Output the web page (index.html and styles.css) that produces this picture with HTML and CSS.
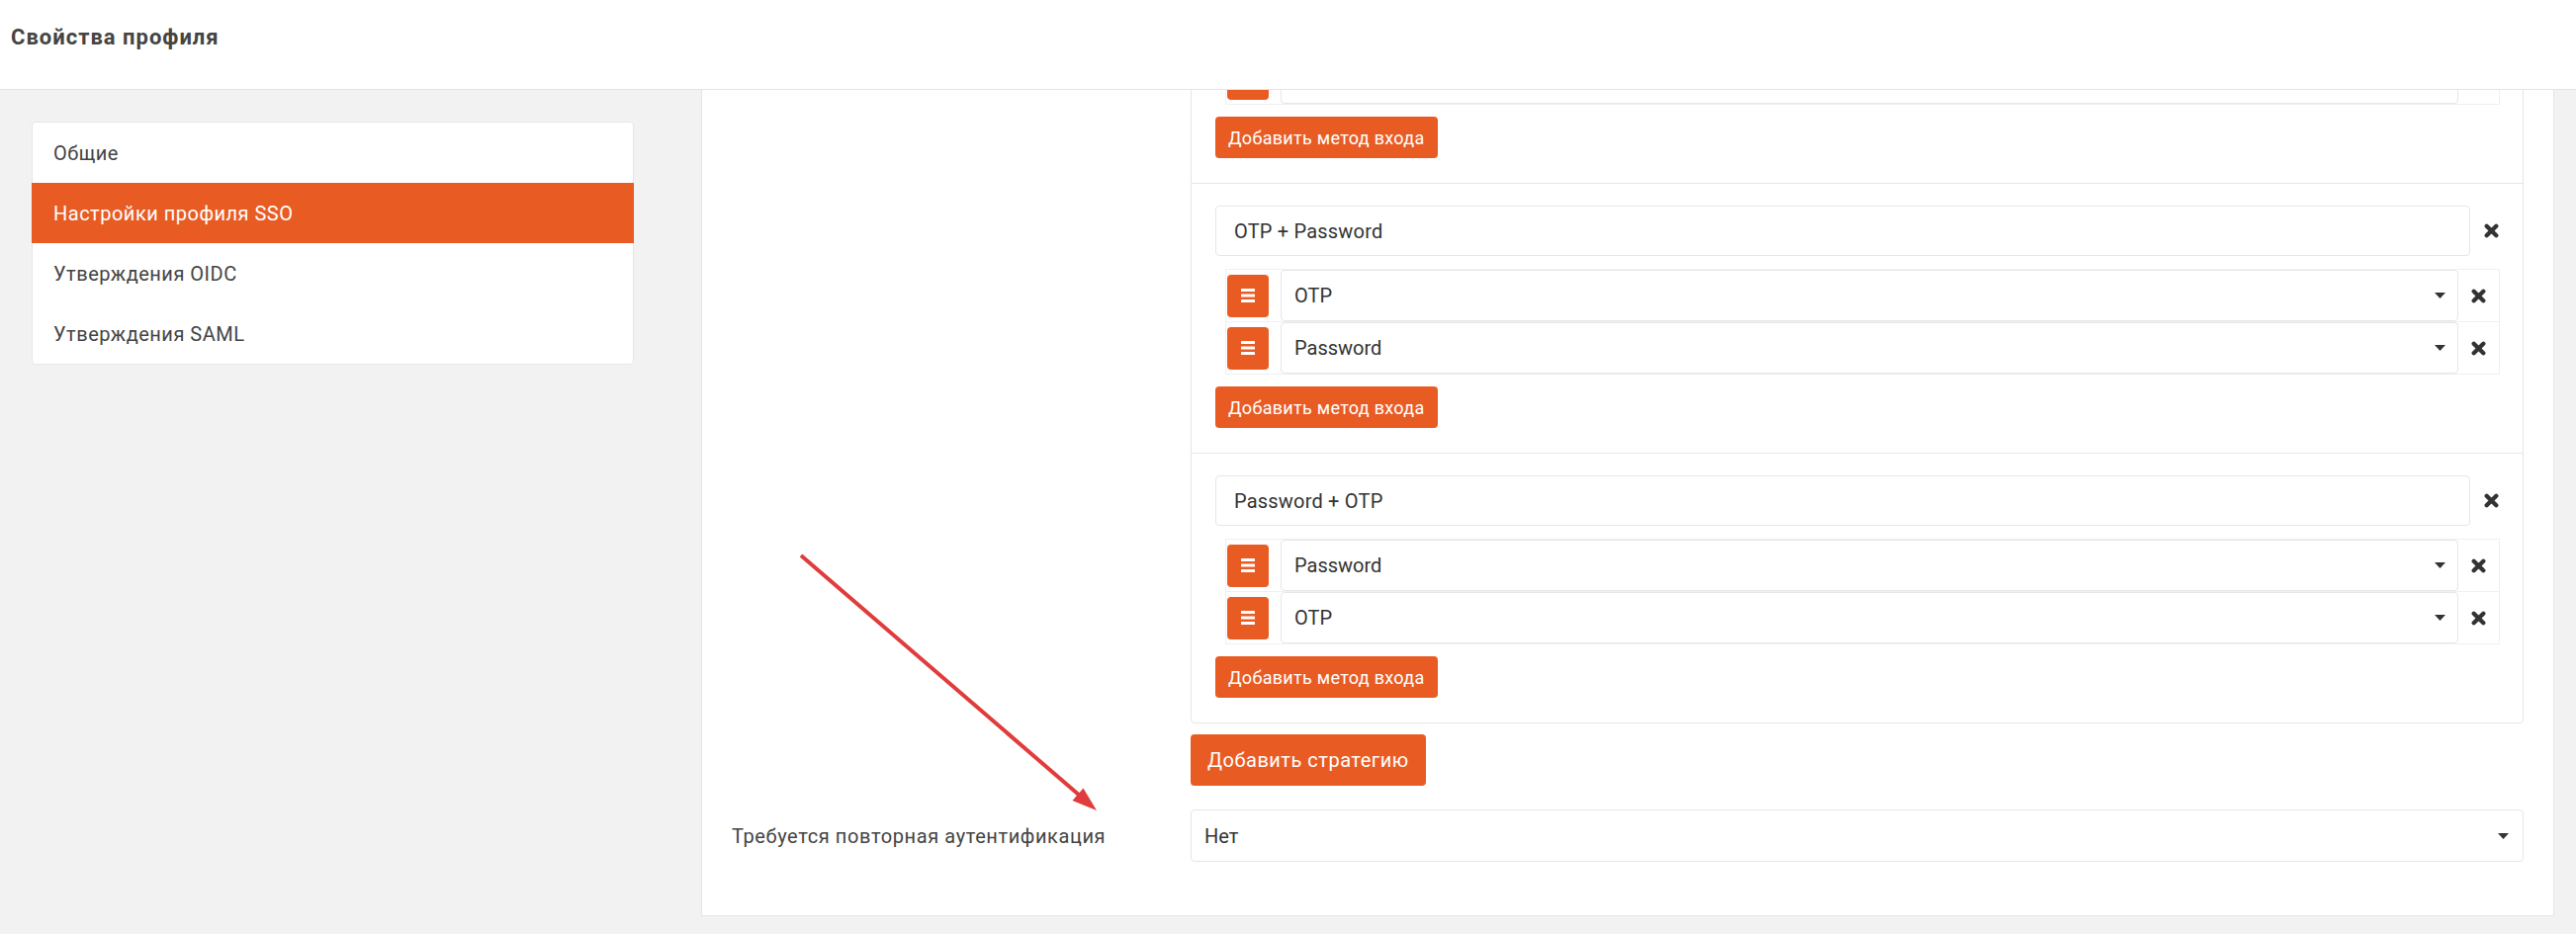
FILE: index.html
```html
<!DOCTYPE html>
<html lang="ru">
<head>
  <meta charset="UTF-8" />
  <meta name="viewport" content="width=device-width, initial-scale=1" />
  <title>Свойства профиля</title>
  <link rel="stylesheet" href="styles.css">
</head>
<body>
  <header class="topbar">
    <h1>Свойства профиля</h1>
  </header>

  <div class="page">
    <nav class="side-menu">
      <a class="side-item">Общие</a>
      <a class="side-item active">Настройки профиля SSO</a>
      <a class="side-item">Утверждения OIDC</a>
      <a class="side-item">Утверждения SAML</a>
    </nav>

    <main class="panel">
      <div class="form-row">
        <div class="form-label"></div>
        <div class="form-value">
          <div class="strategies">

            <!-- new strategy, not filled in yet -->
            <div class="strategy">
              <div class="strategy-head">
                <div class="field"></div>
                <span class="remove"><svg viewBox="0 0 14 14"><path d="M2.5 2.5l9 9M11.5 2.5l-9 9"/></svg></span>
              </div>
              <ul class="methods">
                <li class="method">
                  <span class="drag"><svg viewBox="0 0 14 14"><rect y="0" width="14" height="3" rx="0.6"/><rect y="5.5" width="14" height="3" rx="0.6"/><rect y="11" width="14" height="3" rx="0.6"/></svg></span>
                  <div class="select"><span></span><svg class="caret" viewBox="0 0 11 6"><path d="M0 0h11L5.5 6z"/></svg></div>
                  <span class="remove"><svg viewBox="0 0 14 14"><path d="M2.5 2.5l9 9M11.5 2.5l-9 9"/></svg></span>
                </li>
              </ul>
              <button class="btn">Добавить метод входа</button>
            </div>

            <div class="strategy">
              <div class="strategy-head">
                <div class="field">OTP + Password</div>
                <span class="remove"><svg viewBox="0 0 14 14"><path d="M2.5 2.5l9 9M11.5 2.5l-9 9"/></svg></span>
              </div>
              <ul class="methods">
                <li class="method">
                  <span class="drag"><svg viewBox="0 0 14 14"><rect y="0" width="14" height="3" rx="0.6"/><rect y="5.5" width="14" height="3" rx="0.6"/><rect y="11" width="14" height="3" rx="0.6"/></svg></span>
                  <div class="select">OTP<svg class="caret" viewBox="0 0 11 6"><path d="M0 0h11L5.5 6z"/></svg></div>
                  <span class="remove"><svg viewBox="0 0 14 14"><path d="M2.5 2.5l9 9M11.5 2.5l-9 9"/></svg></span>
                </li>
                <li class="method">
                  <span class="drag"><svg viewBox="0 0 14 14"><rect y="0" width="14" height="3" rx="0.6"/><rect y="5.5" width="14" height="3" rx="0.6"/><rect y="11" width="14" height="3" rx="0.6"/></svg></span>
                  <div class="select">Password<svg class="caret" viewBox="0 0 11 6"><path d="M0 0h11L5.5 6z"/></svg></div>
                  <span class="remove"><svg viewBox="0 0 14 14"><path d="M2.5 2.5l9 9M11.5 2.5l-9 9"/></svg></span>
                </li>
              </ul>
              <button class="btn">Добавить метод входа</button>
            </div>

            <div class="strategy">
              <div class="strategy-head">
                <div class="field">Password + OTP</div>
                <span class="remove"><svg viewBox="0 0 14 14"><path d="M2.5 2.5l9 9M11.5 2.5l-9 9"/></svg></span>
              </div>
              <ul class="methods">
                <li class="method">
                  <span class="drag"><svg viewBox="0 0 14 14"><rect y="0" width="14" height="3" rx="0.6"/><rect y="5.5" width="14" height="3" rx="0.6"/><rect y="11" width="14" height="3" rx="0.6"/></svg></span>
                  <div class="select">Password<svg class="caret" viewBox="0 0 11 6"><path d="M0 0h11L5.5 6z"/></svg></div>
                  <span class="remove"><svg viewBox="0 0 14 14"><path d="M2.5 2.5l9 9M11.5 2.5l-9 9"/></svg></span>
                </li>
                <li class="method">
                  <span class="drag"><svg viewBox="0 0 14 14"><rect y="0" width="14" height="3" rx="0.6"/><rect y="5.5" width="14" height="3" rx="0.6"/><rect y="11" width="14" height="3" rx="0.6"/></svg></span>
                  <div class="select">OTP<svg class="caret" viewBox="0 0 11 6"><path d="M0 0h11L5.5 6z"/></svg></div>
                  <span class="remove"><svg viewBox="0 0 14 14"><path d="M2.5 2.5l9 9M11.5 2.5l-9 9"/></svg></span>
                </li>
              </ul>
              <button class="btn">Добавить метод входа</button>
            </div>

          </div>
          <button class="btn btn-lg">Добавить стратегию</button>
        </div>
      </div>

      <div class="form-row centered">
        <label class="form-label">Требуется повторная аутентификация</label>
        <div class="form-value">
          <div class="select select-wide">Нет<svg class="caret" viewBox="0 0 11 6"><path d="M0 0h11L5.5 6z"/></svg></div>
        </div>
      </div>
    </main>
  </div>

  <!-- hint arrow pointing at the re-auth setting -->
  <svg class="hint-arrow" width="2605" height="945" viewBox="0 0 2605 945">
    <line x1="810" y1="562" x2="1092" y2="805" />
    <polygon points="1109,820 1084.5,810 1095.5,797.5" />
  </svg>
</body>
</html>
```

FILE: styles.css
```css
:root {
  --orange: #e85c24;
  --border: #e6e6e6;
  --text: #3a3a3a;
  --bg: #f2f2f2;
}
* { box-sizing: border-box; }
html, body { height: 100%; }
body {
  margin: 0;
  font-family: Roboto, 'Noto Sans', sans-serif;
  color: var(--text);
  background: var(--bg);
  display: flex;
  flex-direction: column;
  overflow: hidden;
}

.topbar {
  height: 91px;
  flex: none;
  background: #fff;
  border-bottom: 1px solid #e3e3e3;
  padding: 25px 0 0 11px;
  position: relative;
  z-index: 2;
}
.topbar h1 {
  margin: 0;
  font-size: 22px;
  line-height: 26px;
  font-weight: 700;
  letter-spacing: 1px;
  color: #444;
}

.page {
  flex: 1;
  overflow: hidden;
  display: grid;
  grid-template-columns: 609px 1fr;
  column-gap: 68px;
  align-items: start;
  padding: 32px 22px 0 32px;
}

/* left menu */
.side-menu {
  background: #fff;
  border: 1px solid var(--border);
  border-radius: 4px;
  display: flex;
  flex-direction: column;
}
.side-item {
  height: 61px;
  display: flex;
  align-items: center;
  padding: 0 21px;
  font-size: 20px;
  letter-spacing: 0.5px;
  color: #444;
  cursor: pointer;
}
.side-item.active {
  background: var(--orange);
  color: #fff;
  margin: 0 -1px;
  padding-left: 22px;
}

/* main panel, scrolled down to the strategies */
.panel {
  margin-top: -189px;
  background: #fff;
  border: 1px solid var(--border);
  padding: 30px 30px 54px;
}
.form-row {
  display: grid;
  grid-template-columns: 464px 1fr;
}
.form-row + .form-row { margin-top: 24px; }
.form-row.centered { align-items: center; }
.form-label {
  font-size: 20px;
  letter-spacing: 0.6px;
  color: #444;
}

.strategies {
  border: 1px solid var(--border);
  border-radius: 4px;
}
.strategy {
  padding: 22px 11px 25px 24px;
}
.strategy + .strategy { border-top: 1px solid var(--border); }

.strategy-head {
  display: flex;
  align-items: center;
}
.field {
  flex: 1;
  height: 51px;
  border: 1px solid var(--border);
  border-radius: 4px;
  padding: 0 18px;
  display: flex;
  align-items: center;
  font-size: 20px;
  letter-spacing: 0.2px;
  color: #333;
}
.remove {
  width: 42px;
  flex: none;
  display: flex;
  justify-content: center;
  align-items: center;
}
.remove svg {
  width: 15px;
  height: 15px;
  stroke: #333;
  stroke-width: 4;
  stroke-linecap: round;
  fill: none;
}

.methods {
  list-style: none;
  margin: 13px 12px 12px 10px;
  padding: 0;
}
.method {
  display: flex;
  align-items: center;
  border: 1px solid #f0f0f0;
  padding-left: 1px;
}
.method + .method { border-top: none; }
.method .remove { width: 41px; }

.drag {
  width: 42px;
  height: 43px;
  flex: none;
  border-radius: 4px;
  background: var(--orange);
  display: flex;
  align-items: center;
  justify-content: center;
}
.drag svg {
  width: 14px;
  height: 14px;
  fill: #fff;
}

.select {
  flex: 1;
  height: 52px;
  margin-left: 12px;
  border: 1px solid var(--border);
  border-radius: 4px;
  padding: 0 12px 0 13px;
  display: flex;
  align-items: center;
  justify-content: space-between;
  font-size: 20px;
  color: #333;
}
.select-wide {
  margin-left: 0;
  height: 53px;
  padding-right: 14px;
}
.caret {
  width: 11px;
  height: 6px;
  fill: #333;
}

.btn {
  display: flex;
  align-items: center;
  width: max-content;
  height: 42px;
  padding: 0 13px;
  border: none;
  border-radius: 4px;
  background: var(--orange);
  color: #fff;
  font-family: inherit;
  font-size: 18px;
  letter-spacing: 0.3px;
  cursor: pointer;
}
.btn-lg {
  height: 52px;
  padding: 0 17px;
  margin-top: 11px;
  font-size: 20px;
  letter-spacing: 0.5px;
}

.hint-arrow {
  position: absolute;
  left: 0;
  top: 0;
  pointer-events: none;
  z-index: 3;
}
.hint-arrow line {
  stroke: #e03c3c;
  stroke-width: 4;
}
.hint-arrow polygon { fill: #e03c3c; }
```
